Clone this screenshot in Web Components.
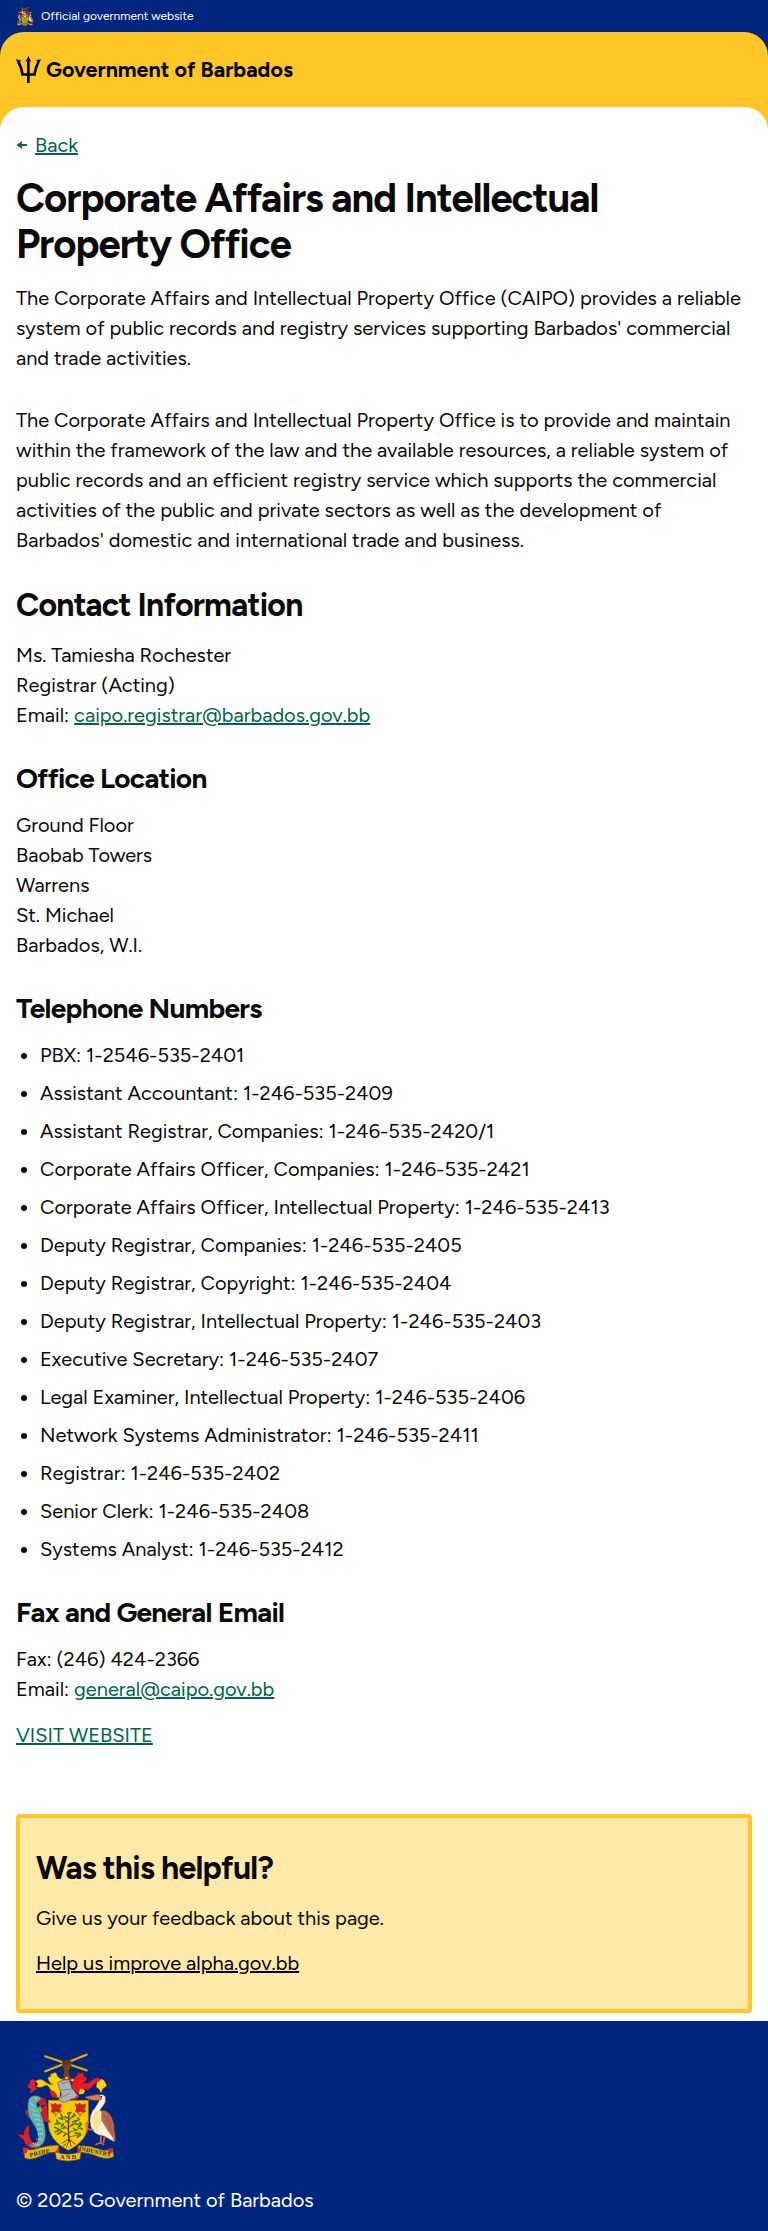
<!DOCTYPE html>
<html lang="en">
<head>
<meta charset="utf-8">
<title>Corporate Affairs and Intellectual Property Office</title>
<style>
html,body{margin:0;padding:0}
body{font-family:Figtree,Lato,"Liberation Sans",sans-serif;font-size:20px;line-height:30px;color:#0a0a0a;background:#fff}
</style>
</head>
<body>
<template id="crest">
<svg viewBox="48 128 300 327" width="100%" height="100%" aria-hidden="true">
<g stroke-linecap="round" fill="none"><path d="M136 138 260 180M136 183 260 133" stroke="#6a5310" stroke-width="8"/><path d="M136 138 260 180M136 183 260 133" stroke="#d9ac25" stroke-width="6"/></g>
<path d="M188 152q12-9 24 0l1 20-6 8 4 28h-22l4-29-5-8z" fill="#6e4423" stroke="#3b2412" stroke-width="2"/>
<path d="M190 157h20M195 150v14M202 150v14" stroke="#3b2412" stroke-width="1.5"/>
<path d="M181 205q-10-4-12-17-8-2-11 2-7-2-6 10-10-4-7 8 5 12 14 14-12 3-24-8-14-12-28-1l7 8-5 8q15 4 23-2 9-7 17 6 6 14 17 18 0 12 14 10z" fill="#ffd20a" stroke="#9d7a08" stroke-width="1.5"/>
<path d="M109 211q-9-8-18-2l-1 8-9 12 11 7-2 14q8-3 14-11l8-2-5-7q-5-9 2-19zM149 240q12-3 19 9l6 14-17-3q-7-8-8-20z" fill="#e31b2b"/>
<path d="M216 205q14-2 17-18 8 3 11 0 8 0 8 12 9-2 7 8-3 8-9 12 16 1 25-8 14-16 30-3l5 12-13 3q-11-8-19 4-10 15-25 8-3 13-18 14-14-6-19-20z" fill="#e31b2b" stroke="#9b101c" stroke-width="1.5"/>
<path d="M291 218l14-12q11 4 15 21l-12 8-5 13q-6-15-14-17zM240 235q12 0 15 7l-5 9-14 1z" fill="#ffd20a"/>
<path d="M182 212q3-12 18-12t20 13z" fill="#d51c2b"/><g fill="#ffd20a"><circle cx="183" cy="209" r="4"/><circle cx="200" cy="203" r="4"/><circle cx="217" cy="209" r="4"/></g>
<path d="M145 270h120v68q0 52-60 82-60-30-60-82z" fill="#ffca05" stroke="#9a7805" stroke-width="2"/>
<path d="M173 217q14-11 35-8l8 25 20 24q-5 8-22 8-18 14-29 8l-10-7 10-12z" fill="#aeb0b3" stroke="#565a60" stroke-width="2"/>
<path d="M184 219l25-5M181 239l34-3M188 260l22-12M185 245v20" stroke="#6b6f75" stroke-width="2"/><path d="M197 272q26-2 38-22l-1 14q-13 8-37 8z" fill="#d8232e"/>
<g fill="#d7291f"><path d="M151 279l8 3 7-5 7 6 11-4v13l-5 5 7 5-8 6-10-4-9 5-8-7 5-5z"/><path d="M224 279l8 3 7-5 7 6 11-4v13l-5 5 7 5-8 6-10-4-9 5-8-7 5-5z"/></g>
<g fill="none" stroke="#861e13" stroke-width="2"><path d="M156 284l9 8 12-7M155 300l11-4 12 6M229 284l9 8 12-7M228 300l11-4 12 6"/></g>
<path d="M161 308l6 8 7-8M167 307v13M234 308l6 8 7-8M240 307v13" stroke="#a27b08" stroke-width="3" fill="none"/>
<g fill="none" stroke="#3e3512" stroke-linecap="round"><path d="M207 309l-2 45 2 38" stroke-width="4"/><path d="M206 386l-20 13M207 387l-7 23M208 387l17 14M208 386l5 22M198 401l-9 7" stroke-width="2.5"/><path d="M205 374l-31-18M205 357l-35-26M206 339l-21-24M207 330l14-17M207 350l30-22M207 366l36-13M207 380l33-8" stroke-width="2"/></g>
<g stroke="#3c7a1c" stroke-width="5" stroke-linecap="round" fill="none"><path d="M203 309l10-2M195 319l8 4M183 312l3 10M188 327l-12-4M170 329l3 8M178 340l-14 1M190 340l-6 8M195 352l-8 2M164 351l12 5M180 358l-15 7M185 364l-13 8M198 369l-7 8M214 322l11-7M222 310l2 6M217 335l15-5M233 323l5 5M226 341l11 1M240 337l4 5M221 355l8 5M235 351l7-7M242 354l5 3M226 368l15 2M242 374l-10 6M213 346l7-4M198 334l7-3"/></g>
<path d="M119 297l22-17 3 45q7 6 8 13l-23-6zM84 292l-9 14 16 24zM108 262l14 10 16-7v17l-18 5z" fill="#ce1b30"/>
<path d="M91 264q15-16 32-3l15 5-14 9q-14 0-15 10l11 18q11 21 14 48 7 30-3 47-14 21-36 16-21-8-23-24l-21-19 20 3q0-20 16-31 2 22-1 26 5 27 17 27 14-1 13-23-5-23-15-36-22-28-15-66z" fill="#dc2032" stroke="#7d1427" stroke-width="2"/>
<path d="M86 267q13-18 38-5l-7 10q-11 4-6 16 16 27 21 52 10 43-4 60-20 21-46 2 32 6 33-19-1-24-16-44-22-29-13-72z" fill="#5eb3b1" stroke="#25696c" stroke-width="1.5"/>
<path d="M90 280l15 9M91 297l19 6M98 311l20 6M105 327l18 3M111 342l18 1M113 357l18-1M114 372l17-2M109 386l19 2M98 399l20 4" stroke="#b5e4e2" stroke-width="4" stroke-dasharray="3 3"/>
<path d="M111 297l10-12 5 15-7 12z" fill="#60b856"/><circle cx="109" cy="264" r="3" fill="#ffd20a"/>
<path d="M307 298q27 5 35 43l5 49-5 5-18-36-19-30z" fill="#b86950" stroke="#573126" stroke-width="2"/>
<path d="M292 257q15-10 24 2 4 15-7 28l-10 13q14 3 25 29l19 66-30-17q-33-3-41-30-8-35 14-57l12-20-12-7z" fill="#f5f0df" stroke="#555244" stroke-width="1.5"/>
<path d="M276 325q11-30 21-23 3 22 7 40-12-2-13 24-14-15-15-41" fill="#f8e58e"/>
<path d="M304 303q26-2 36 41l6 47-21-27-21-34z" fill="#b86950"/><path d="M306 313q12 4 18 20M315 331l17 17M325 348l15 24M321 314l15 32" stroke="#8a4b3b" stroke-width="2" fill="none"/>
<path d="M256 259l39-7 10 14q-17 11-48-3z" fill="#e77948" stroke="#8e3c22" stroke-width="2"/><circle cx="304" cy="259" r="2.5" fill="#181818"/>
<path d="M303 374l-1 23-16 6M303 398l10 5M314 379l-4 18M281 359l-18-3-5-18M263 354l-5 8M258 342l8-9" fill="none" stroke="#d95e43" stroke-width="5"/>
<path d="M71 413q18 10 38 2 40-11 67-10v20q-30-1-61 15-25 11-41 3z" fill="#e5b51c" stroke="#765b12" stroke-width="2"/>
<path d="M234 406q34-1 60 9 21 10 44 0l3 24q-17 10-44 1-29-14-63-15z" fill="#e5b51c" stroke="#765b12" stroke-width="2"/>
<path d="M166 424q35 15 77 0l-3 22q-38 12-71 0z" fill="#f0be25" stroke="#765b12" stroke-width="2"/>
<path d="M69 412l15 1-3 14-10 4zM338 412l-16 4 4 13 13-3zM167 424l10-17 1 22zM243 424l-10-17v22z" fill="#d82b2b"/>
<g class="motto" fill="#302a15" font-family="Liberation Serif,serif" font-size="18" font-weight="700"><text x="90" y="440" textLength="62" transform="rotate(-13 90 440)">PRIDE</text><text x="181" y="447" textLength="47">AND</text><text x="236" y="420" textLength="98" transform="rotate(11 236 420)">INDUSTRY</text></g>
</svg>
</template>

<gov-banner>Official government website</gov-banner>
<gov-header>Government of Barbados</gov-header>
<gov-main>
  <back-link>Back</back-link>
  <gov-heading level="1">Corporate Affairs and Intellectual<br>Property Office</gov-heading>
  <gov-text>The Corporate Affairs and Intellectual Property Office (CAIPO) provides a reliable system of public records and registry services supporting Barbados' commercial and trade activities.</gov-text>
  <gov-text spaced>The Corporate Affairs and Intellectual Property Office is to provide and maintain within the framework of the law and the available resources, a reliable system of public records and an efficient registry service which supports the commercial activities of the public and private sectors as well as the development of Barbados' domestic and international trade and business.</gov-text>
  <gov-heading level="2">Contact Information</gov-heading>
  <gov-text>Ms. Tamiesha Rochester<br>Registrar (Acting)<br>Email: <gov-link>caipo.registrar@barbados.gov.bb</gov-link></gov-text>
  <gov-heading level="3">Office Location</gov-heading>
  <gov-text>Ground Floor<br>Baobab Towers<br>Warrens<br>St. Michael<br>Barbados, W.I.</gov-text>
  <gov-heading level="3">Telephone Numbers</gov-heading>
  <phone-list>
    <phone-item>PBX: 1-2546-535-2401</phone-item>
    <phone-item>Assistant Accountant: 1-246-535-2409</phone-item>
    <phone-item>Assistant Registrar, Companies: 1-246-535-2420/1</phone-item>
    <phone-item>Corporate Affairs Officer, Companies: 1-246-535-2421</phone-item>
    <phone-item>Corporate Affairs Officer, Intellectual Property: 1-246-535-2413</phone-item>
    <phone-item>Deputy Registrar, Companies: 1-246-535-2405</phone-item>
    <phone-item>Deputy Registrar, Copyright: 1-246-535-2404</phone-item>
    <phone-item>Deputy Registrar, Intellectual Property: 1-246-535-2403</phone-item>
    <phone-item>Executive Secretary: 1-246-535-2407</phone-item>
    <phone-item>Legal Examiner, Intellectual Property: 1-246-535-2406</phone-item>
    <phone-item>Network Systems Administrator: 1-246-535-2411</phone-item>
    <phone-item>Registrar: 1-246-535-2402</phone-item>
    <phone-item>Senior Clerk: 1-246-535-2408</phone-item>
    <phone-item>Systems Analyst: 1-246-535-2412</phone-item>
  </phone-list>
  <gov-heading level="3">Fax and General Email</gov-heading>
  <gov-text>Fax: (246) 424-2366<br>Email: <gov-link>general@caipo.gov.bb</gov-link></gov-text>
  <gov-text action><gov-link>VISIT WEBSITE</gov-link></gov-text>
  <gov-feedback>
    <span slot="title">Was this helpful?</span>
    <span>Give us your feedback about this page.</span>
    <gov-link slot="link">Help us improve alpha.gov.bb</gov-link>
  </gov-feedback>
</gov-main>
<gov-footer>© 2025 Government of Barbados</gov-footer>

<script>
const define = (name, html, setup) => customElements.define(name, class extends HTMLElement {
  connectedCallback() {
    if (this.shadowRoot) return;
    this.attachShadow({mode: 'open'}).innerHTML = html;
    if (setup) setup(this, this.shadowRoot);
  }
});

define('gov-crest', `<style>:host{display:block}svg{display:block}:host([small]) .motto{display:none}</style>`,
  (el, root) => root.append(document.getElementById('crest').content.cloneNode(true)));

define('gov-link', `<style>
  :host{display:inline}
  a{color:var(--link,#00654a);text-decoration:underline;text-decoration-thickness:2px;text-underline-offset:1px}
</style><a href="#"><slot></slot></a>`);

define('gov-banner', `<style>
  :host{display:flex;align-items:center;gap:8px;height:32px;padding:0 16px;background:#00267f;color:#fff;font-size:12px;line-height:18px}
  gov-crest{width:17px;height:19px}
</style><gov-crest small></gov-crest><span><slot></slot></span>`);

define('gov-header', `<style>
  :host{display:block;background:#00267f}
  .bar{display:flex;align-items:center;gap:5px;height:75px;padding:0 16px 24px;background:#ffc726;border-radius:24px 24px 0 0;color:#000;font-size:21.5px;font-weight:700;line-height:28px}
  svg{display:block;width:25px;height:27px}
</style><div class="bar"><svg viewBox="0 0 75 81"><path fill="#000" d="M37 0q3 8 9 17l-5-2v37h11q3-19 12-36-2-3-5-3l16-3-4 8q-9 19-12 41H41v22h-8V59H16Q13 36 4 20L0 10l16 4q-3 1-4 3 8 17 11 35h10V15l-5 2Q34 9 37 0z"/></svg><span><slot></slot></span></div>`);

define('gov-main', `<style>
  :host{display:block;background:#ffc726}
  main{display:block;background:#fff;border-radius:24px 24px 0 0;padding:23px 16px 8px;margin-top:-24px}
</style><main><slot></slot></main>`);

define('back-link', `<style>
  :host{display:flex;align-items:center;gap:8px;height:30px}
  svg{display:block;width:11px;height:8px}
</style><svg viewBox="0 0 33 24"><path fill="#0e5f64" d="M1 12 19 0l-2 9h16v6H17l2 9z"/></svg><gov-link><slot></slot></gov-link>`);

define('gov-heading', `<style>
  :host{display:block;font-weight:700;letter-spacing:-.025em}
  :host([level="1"]){margin:15px 0 16px;font-size:40px;line-height:46px}
  :host([level="2"]){margin:32px 0 16px;font-size:32px;line-height:37px;letter-spacing:-.0235em}
  :host([level="3"]){margin:32px 0 16px;font-size:28px;line-height:32px}
</style><div role="heading"><slot></slot></div>`,
  (el, root) => root.querySelector('div').setAttribute('aria-level', el.getAttribute('level')));

define('gov-text', `<style>
  :host{display:block}
  :host([spaced]){margin-top:32px}
  :host([action]){margin-top:16px}
</style><slot></slot>`);

define('phone-list', `<style>:host{display:flex;flex-direction:column;gap:8px}</style><slot></slot>`);
define('phone-item', `<style>
  :host{display:flex;align-items:center;padding-left:5px}
  i{width:6px;height:6px;margin:1px 13px 0 0;border-radius:50%;background:#0a0a0a}
</style><i></i><span><slot></slot></span>`);

define('gov-feedback', `<style>
  :host{display:block;box-sizing:border-box;height:199px;margin-top:64px;padding:32px 16px 0;border:4px solid #ffc726;border-radius:4px;background:#ffe9a8;--link:#000}
  .title{font-size:32px;font-weight:700;line-height:37px;letter-spacing:-.0235em;margin-bottom:16px}
  .link{margin-top:15px}
</style><div class="title"><slot name="title"></slot></div><slot></slot><div class="link"><slot name="link"></slot></div>`);

define('gov-footer', `<style>
  :host{display:block;box-sizing:border-box;height:210px;padding:32px 16px 16px;background:#00267f;color:#fff}
  gov-crest{width:100px;height:109px;margin-bottom:23px}
</style><gov-crest></gov-crest><slot></slot>`);
</script>
</body>
</html>
